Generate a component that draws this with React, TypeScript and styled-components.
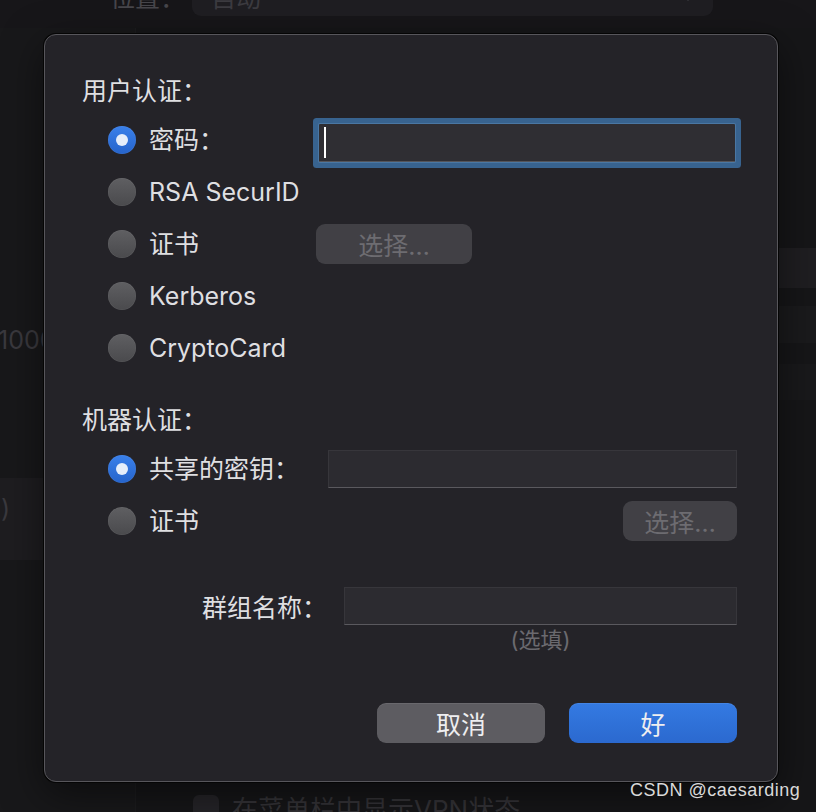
import React from 'react';
import styled, { createGlobalStyle } from 'styled-components';

const FONT = `"Inter", "Noto Sans CJK SC", sans-serif`;

const Global = createGlobalStyle`
  html, body { margin: 0; padding: 0; background: #171619; }
  body { font-family: ${FONT}; }
  * { box-sizing: border-box; }
`;

const Page = styled.div`
  position: relative;
  width: 816px;
  height: 812px;
  overflow: hidden;
  background: #171619;
  display: flex;
  flex-direction: column;
  font-family: ${FONT};
`;

/* ---------- background page ---------- */

const TopRow = styled.div`
  display: flex;
  align-items: center;
  height: 40px;
  margin-top: -24px;
  padding-left: 110px;
  gap: 7px;
  flex-shrink: 0;
`;

const BgLabel = styled.span`
  width: 75px;
  font-size: 25px;
  color: #47464b;
  white-space: nowrap;
`;

const Dropdown = styled.div`
  width: 521px;
  height: 40px;
  border-radius: 9px;
  background: #1f1e22;
  display: flex;
  align-items: center;
  justify-content: space-between;
  padding: 0 14px 0 19px;
  font-size: 25px;
  color: #3c3b40;
`;

const Body = styled.div`
  flex: 1;
  display: flex;
  margin-top: 12px;
  min-height: 0;
`;

const LeftCol = styled.div`
  width: 136px;
  display: flex;
  flex-direction: column;
  background: #18181a;
  border-right: 1px solid #1c1c1e;
`;

const RightCol = styled.div`
  flex: 1;
  display: flex;
  flex-direction: column;
  background: #161618;
`;

const Band = styled.div<{ $h?: number; $bg?: string; $pt?: number }>`
  flex: ${(p) => (p.$h ? `0 0 ${p.$h}px` : '1')};
  background: ${(p) => p.$bg || 'transparent'};
  padding-top: ${(p) => p.$pt || 0}px;
  font-size: 25px;
  line-height: 30px;
  color: #3a393e;
  white-space: nowrap;
  overflow: hidden;
`;

const BgText = styled.span<{ $ml: number }>`
  display: inline-block;
  margin-left: ${(p) => p.$ml}px;
`;

const BottomRow = styled.div`
  flex: 0 0 30px;
  margin-bottom: -14px;
  display: flex;
  align-items: center;
  padding-left: 57px;
  gap: 13px;
`;

const Checkbox = styled.div`
  width: 26px;
  height: 26px;
  border-radius: 6px;
  background: #252428;
`;

const BgCheckText = styled.span`
  font-size: 26px;
  color: #343337;
  white-space: nowrap;
`;

const Watermark = styled.div`
  position: absolute;
  left: 630px;
  top: 779px;
  font-family: "Liberation Sans", sans-serif;
  font-size: 18px;
  letter-spacing: 0.5px;
  line-height: 22px;
  color: #d9d9d9;
  white-space: nowrap;
`;

/* ---------- dialog ---------- */

const Dialog = styled.div`
  position: absolute;
  left: 44px;
  top: 34px;
  width: 734px;
  height: 748px;
  background: #242328;
  border: 1px solid #57565b;
  border-radius: 12px;
  box-shadow: 0 0 0 1px #050505, 0 12px 40px rgba(0, 0, 0, 0.5);
  padding: 41px 40px 0 37px;
  display: flex;
  flex-direction: column;
  color: #dfdfe1;
  font-size: 25px;
`;

const SectionTitle = styled.div<{ $mt?: number }>`
  height: 30px;
  line-height: 30px;
  margin-top: ${(p) => p.$mt || 0}px;
  white-space: nowrap;
`;

const RadioGroup = styled.div`
  display: flex;
  flex-direction: column;
  margin-top: 8px;
  padding-left: 26px;
`;

const Row = styled.div<{ $labelW: number }>`
  display: grid;
  grid-template-columns: ${(p) => p.$labelW}px 1fr;
  align-items: center;
  height: 52px;
`;

const RadioLabel = styled.label`
  display: flex;
  align-items: center;
  gap: 13px;
  white-space: nowrap;
  line-height: 30px;
`;

const Radio = styled.span<{ $checked?: boolean }>`
  width: 28px;
  height: 28px;
  border-radius: 50%;
  flex-shrink: 0;
  display: flex;
  align-items: center;
  justify-content: center;
  background: ${(p) =>
    p.$checked
      ? 'linear-gradient(180deg, #3a80ea 0%, #2664cb 100%)'
      : 'linear-gradient(180deg, #5f5f62 0%, #4a4a4d 100%)'};
  box-shadow: inset 0 0 0 0.5px rgba(255, 255, 255, 0.08);
  &::after {
    content: '';
    display: ${(p) => (p.$checked ? 'block' : 'none')};
    width: 12px;
    height: 12px;
    border-radius: 50%;
    background: #e6eefa;
  }
`;

const PasswordField = styled.div`
  width: 416px;
  height: 38px;
  margin-top: 6px;
  background: #2f2e33;
  border-bottom: 1px solid #55555a;
  border-radius: 1px;
  box-shadow: 0 0 0 1px #4a77a3, 0 0 0 6px #38638f;
  display: flex;
  align-items: flex-start;
  padding: 3px 0 0 5px;
`;

const Caret = styled.span`
  width: 2px;
  height: 31px;
  background: #ffffff;
`;

const TextInput = styled.div`
  height: 38px;
  background: #2c2b30;
  border: 1px solid #37363b;
  border-bottom-color: #5a595e;
`;

const ChooseButton = styled.button<{ $w: number; $ml?: number; $justify?: string }>`
  width: ${(p) => p.$w}px;
  height: 40px;
  margin-left: ${(p) => p.$ml || 0}px;
  justify-self: ${(p) => p.$justify || 'start'};
  border: none;
  border-radius: 9px;
  background: #414045;
  color: #6d6c71;
  font-family: ${FONT};
  font-size: 25px;
  padding: 0;
  display: flex;
  align-items: center;
  justify-content: center;
  white-space: nowrap;
`;

const FieldRow = styled.div`
  display: grid;
  grid-template-columns: 262px 1fr;
  align-items: center;
  height: 38px;
  margin-top: 40px;
`;

const FieldLabel = styled.span`
  text-align: right;
  padding-right: 17px;
  white-space: nowrap;
`;

const HintRow = styled.div`
  display: grid;
  grid-template-columns: 262px 1fr;
  margin-top: 2px;
`;

const Hint = styled.span`
  grid-column: 2;
  text-align: center;
  font-size: 22px;
  line-height: 26px;
  color: #6b6a6f;
`;

const ButtonRow = styled.div`
  display: flex;
  justify-content: flex-end;
  gap: 24px;
  margin-top: 50px;
`;

const PushButton = styled.button<{ $primary?: boolean }>`
  width: 168px;
  height: 40px;
  border: none;
  border-radius: 9px;
  padding: 0;
  font-family: ${FONT};
  font-size: 25px;
  color: #eeeef0;
  background: ${(p) =>
    p.$primary
      ? 'linear-gradient(180deg, #347ae2 0%, #2b69cf 100%)'
      : '#5d5c61'};
  box-shadow: inset 0 1px 0 rgba(255, 255, 255, 0.08);
`;

const Chevron = () => (
  <svg width="22" height="14" viewBox="0 0 22 14" fill="none">
    <path d="M3 2 L11 10 L19 2" stroke="#48474c" strokeWidth="3" strokeLinecap="round" strokeLinejoin="round" />
  </svg>
);

export default function App() {
  return (
    <Page>
      <Global />
      <TopRow>
        <BgLabel>位置：</BgLabel>
        <Dropdown>
          <span>自动</span>
          <Chevron />
        </Dropdown>
      </TopRow>
      <Body>
        <LeftCol>
          <Band $h={450} $pt={297}>
            <BgText $ml={-2}>10000</BgText>
          </Band>
          <Band $h={82} $bg="#1e1d20" $pt={15}>
            <BgText $ml={1}>)</BgText>
          </Band>
          <Band />
        </LeftCol>
        <RightCol>
          <Band $h={220} />
          <Band $h={40} $bg="#1f1e21" />
          <Band $h={18} />
          <Band $h={37} $bg="#1a1a1c" />
          <Band $h={21} />
          <Band $h={36} $bg="#19191b" />
          <Band />
          <BottomRow>
            <Checkbox />
            <BgCheckText>在菜单栏中显示VPN状态</BgCheckText>
          </BottomRow>
        </RightCol>
      </Body>

      <Dialog>
        <SectionTitle>用户认证：</SectionTitle>
        <RadioGroup>
          <Row $labelW={211}>
            <RadioLabel><Radio $checked />密码：</RadioLabel>
            <PasswordField><Caret /></PasswordField>
          </Row>
          <Row $labelW={211}>
            <RadioLabel><Radio />RSA SecurID</RadioLabel>
          </Row>
          <Row $labelW={211}>
            <RadioLabel><Radio />证书</RadioLabel>
            <ChooseButton $w={156} $ml={-3}>选择…</ChooseButton>
          </Row>
          <Row $labelW={211}>
            <RadioLabel><Radio />Kerberos</RadioLabel>
          </Row>
          <Row $labelW={211}>
            <RadioLabel><Radio />CryptoCard</RadioLabel>
          </Row>
        </RadioGroup>

        <SectionTitle $mt={31}>机器认证：</SectionTitle>
        <RadioGroup>
          <Row $labelW={220}>
            <RadioLabel><Radio $checked />共享的密钥：</RadioLabel>
            <TextInput />
          </Row>
          <Row $labelW={220}>
            <RadioLabel><Radio />证书</RadioLabel>
            <ChooseButton $w={114} $justify="end">选择…</ChooseButton>
          </Row>
        </RadioGroup>

        <FieldRow>
          <FieldLabel>群组名称：</FieldLabel>
          <TextInput />
        </FieldRow>
        <HintRow>
          <Hint>(选填)</Hint>
        </HintRow>

        <ButtonRow>
          <PushButton>取消</PushButton>
          <PushButton $primary>好</PushButton>
        </ButtonRow>
      </Dialog>

      <Watermark>CSDN @caesarding</Watermark>
    </Page>
  );
}
